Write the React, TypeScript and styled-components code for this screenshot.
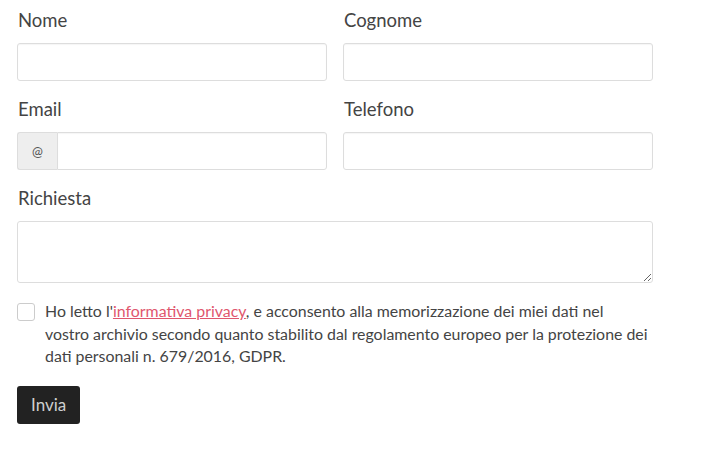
import styled, { createGlobalStyle } from 'styled-components'

const GlobalStyle = createGlobalStyle`
   * {
      box-sizing: border-box;
   }
   body {
      margin: 0;
      background: #ffffff;
      font-family: 'Lato', 'Noto Sans', sans-serif;
      color: #444444;
   }
`

const Form = styled.form`
   width: 636px;
   margin: 0 0 0 17px;
   padding-top: 7px;
   display: flex;
   flex-direction: column;
`

const Row = styled.div`
   display: grid;
   grid-template-columns: 1fr 1fr;
   column-gap: 16px;
`

const Field = styled.div`
   display: flex;
   flex-direction: column;
   margin-bottom: 15px;
`

const Label = styled.label`
   font-size: 18.5px;
   line-height: 26px;
   color: #444444;
   margin-bottom: 10px;
   padding-left: 1px;
`

const Input = styled.input`
   height: 38px;
   width: 100%;
   border: 1px solid #dddddd;
   border-radius: 3px;
   padding: 6px 12px;
   font: inherit;
   font-size: 15px;
   box-shadow: inset 0 1px 1px rgba(0, 0, 0, 0.04);
   outline: none;
`

const InputGroup = styled.div`
   display: flex;
   height: 38px;
`

const Addon = styled.span`
   width: 40px;
   flex: 0 0 40px;
   display: flex;
   align-items: center;
   justify-content: center;
   background: #eeeeee;
   border: 1px solid #dddddd;
   border-right: none;
   border-radius: 3px 0 0 3px;
   font-size: 13px;
   color: #555555;
`

const GroupInput = styled(Input)`
   border-radius: 0 3px 3px 0;
`

const TextArea = styled.textarea`
   height: 62px;
   width: 100%;
   border: 1px solid #dddddd;
   border-radius: 3px;
   padding: 6px 12px;
   font: inherit;
   font-size: 15px;
   resize: vertical;
   outline: none;
   display: block;
`

const Consent = styled.label`
   display: flex;
   align-items: flex-start;
   gap: 10px;
   margin-top: 2px;
   font-size: 15.9px;
   line-height: 22.5px;
   color: #444444;
`

const Box = styled.span`
   flex: 0 0 18px;
   width: 18px;
   height: 18px;
   margin-top: 3px;
   border: 1px solid #cccccc;
   border-radius: 3px;
   background: #ffffff;
`

const Link = styled.a`
   color: #e0566e;
   text-decoration: underline;
`

const Button = styled.button`
   align-self: flex-start;
   margin-top: 18px;
   height: 38px;
   padding: 0 14px;
   background: #222222;
   color: #cfcfcf;
   border: none;
   border-radius: 3px;
   font: inherit;
   font-size: 17px;
   cursor: pointer;
`

const App: React.FC = () => {
   return (
      <>
         <GlobalStyle />
         <Form onSubmit={(e) => e.preventDefault()}>
            <Row>
               <Field>
                  <Label>Nome</Label>
                  <Input type="text" />
               </Field>
               <Field>
                  <Label>Cognome</Label>
                  <Input type="text" />
               </Field>
            </Row>
            <Row>
               <Field>
                  <Label>Email</Label>
                  <InputGroup>
                     <Addon>@</Addon>
                     <GroupInput type="email" />
                  </InputGroup>
               </Field>
               <Field>
                  <Label>Telefono</Label>
                  <Input type="tel" />
               </Field>
            </Row>
            <Field>
               <Label>Richiesta</Label>
               <TextArea />
            </Field>
            <Consent>
               <Box />
               <span>
                  Ho letto l'<Link href="#">informativa privacy</Link>, e
                  acconsento alla memorizzazione dei miei dati nel
                  <br />
                  vostro archivio secondo quanto stabilito dal regolamento
                  europeo per la protezione dei dati personali n. 679/2016,
                  GDPR.
               </span>
            </Consent>
            <Button type="submit">Invia</Button>
         </Form>
      </>
   )
}

export default App
